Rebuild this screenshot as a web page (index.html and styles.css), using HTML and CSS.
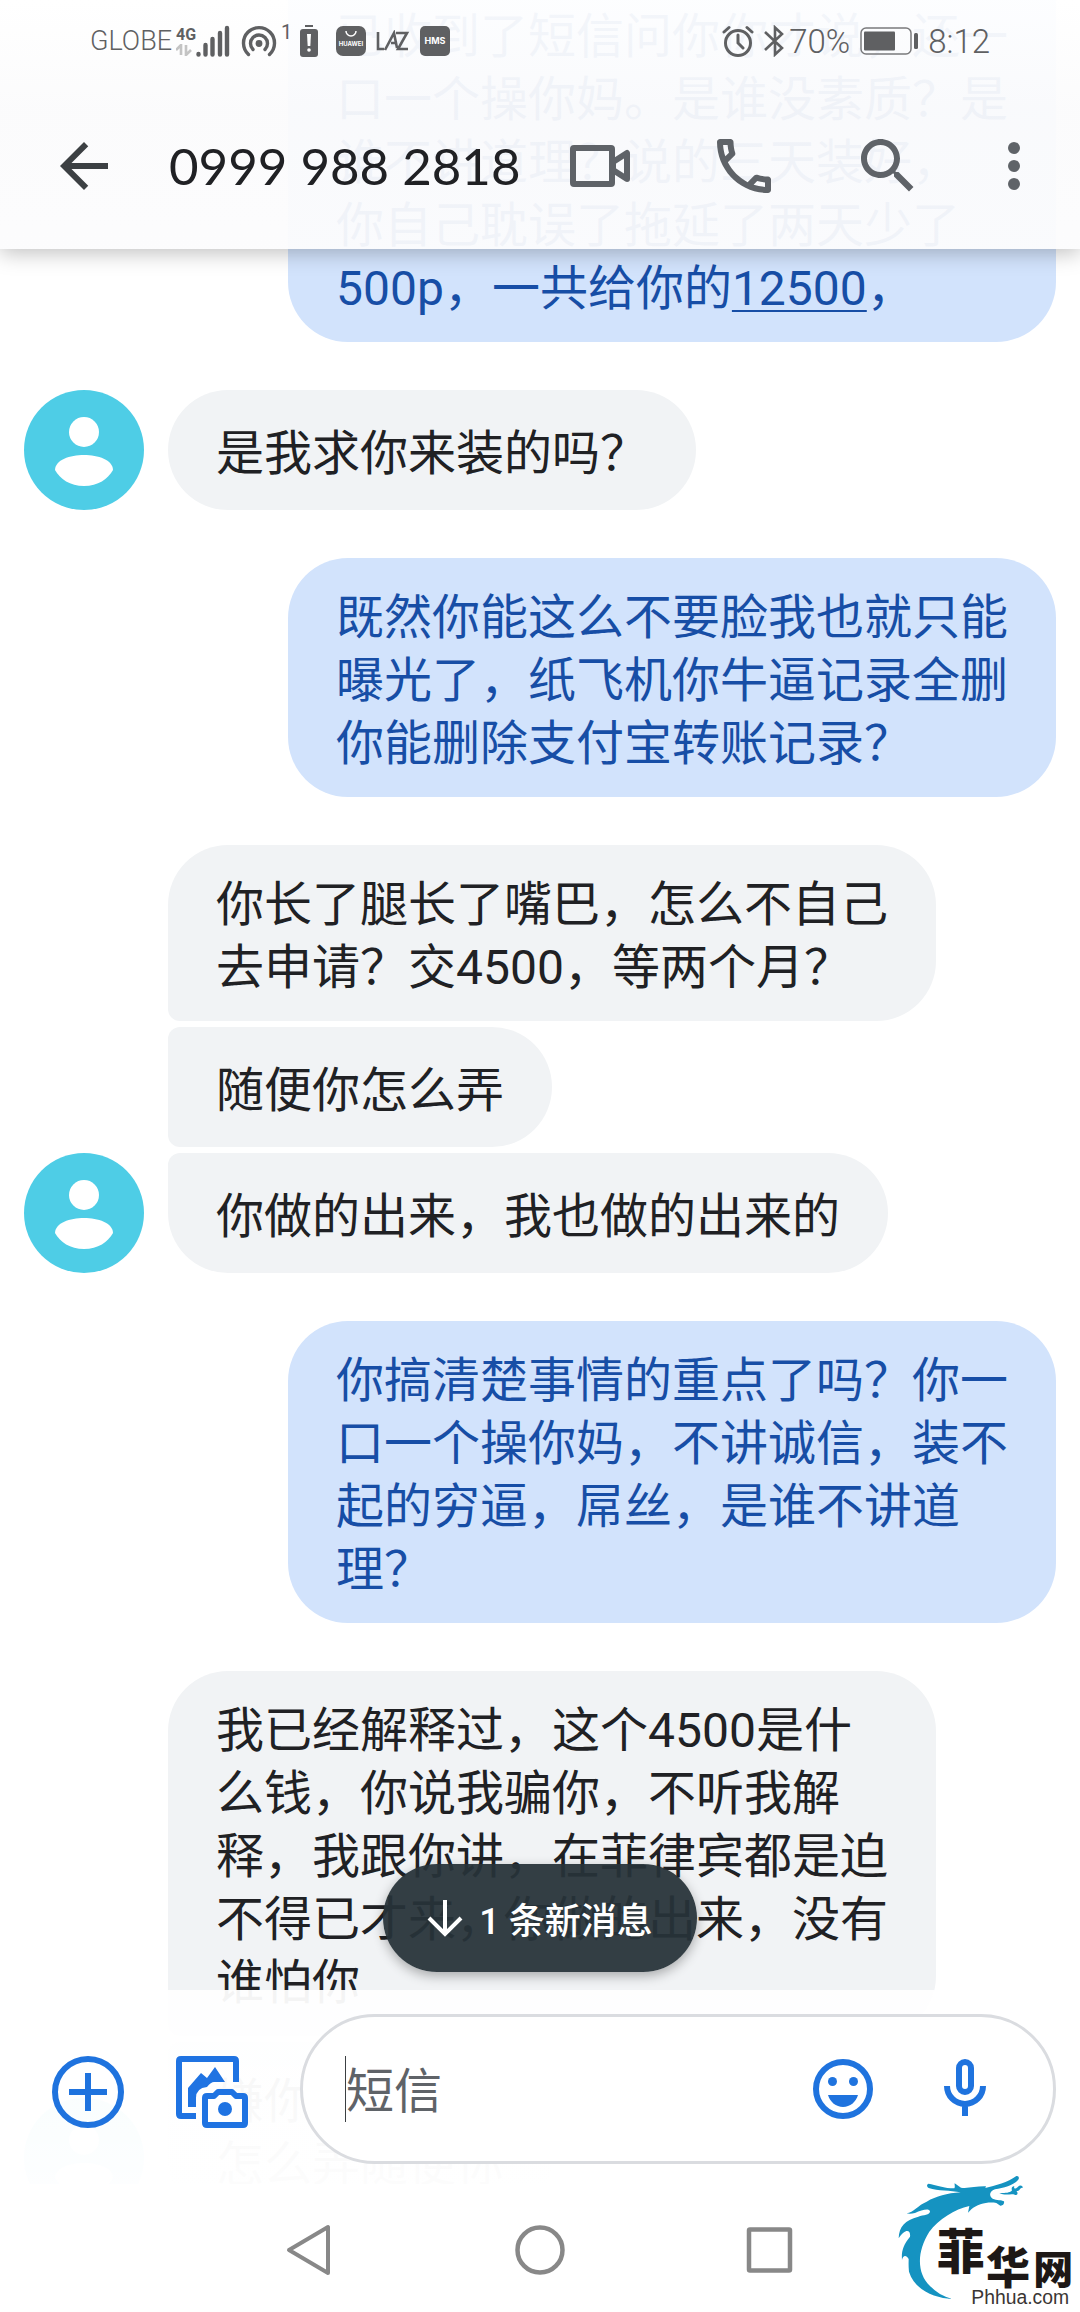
FILE: index.html
```html
<!DOCTYPE html>
<html lang="zh-CN">
<head>
<meta charset="utf-8">
<meta name="viewport" content="width=device-width, initial-scale=1">
<title>0999 988 2818</title>
<link rel="stylesheet" href="styles.css">
</head>
<body>
<div class="screen">
  <main class="chat">
    <section class="group group--out">
      <div class="bubbles">
        <p class="bubble bubble--continued">已收到了短信问你你才说，还一口一个操你妈。是谁没素质？是谁不讲道理？说的三天装好，<br>你自己耽误了拖延了两天少了500p，一共给你的<a class="bubble-link" href="#">12500</a>，</p>
      </div>
    </section>
    <section class="group group--in">
      <svg class="avatar" viewBox="0 0 120 120" aria-hidden="true"><circle cx="60" cy="60" r="60" fill="#4ecde6"/><circle cx="60" cy="42" r="15" fill="#fff"/><path d="M31 80C31 70 46 65 60 65S89 70 89 80C84 89 74 96 60 96S36 89 31 80Z" fill="#fff"/></svg>
      <div class="bubbles">
        <p class="bubble">是我求你来装的吗？</p>
      </div>
    </section>
    <section class="group group--out">
      <div class="bubbles">
        <p class="bubble">既然你能这么不要脸我也就只能曝光了，纸飞机你牛逼记录全删你能删除支付宝转账记录？</p>
      </div>
    </section>
    <section class="group group--in">
      <svg class="avatar" viewBox="0 0 120 120" aria-hidden="true"><circle cx="60" cy="60" r="60" fill="#4ecde6"/><circle cx="60" cy="42" r="15" fill="#fff"/><path d="M31 80C31 70 46 65 60 65S89 70 89 80C84 89 74 96 60 96S36 89 31 80Z" fill="#fff"/></svg>
      <div class="bubbles">
        <p class="bubble">你长了腿长了嘴巴，怎么不自己去申请？交4500，等两个月？</p>
        <p class="bubble">随便你怎么弄</p>
        <p class="bubble">你做的出来，我也做的出来的</p>
      </div>
    </section>
    <section class="group group--out">
      <div class="bubbles">
        <p class="bubble">你搞清楚事情的重点了吗？你一口一个操你妈，不讲诚信，装不起的穷逼，屌丝，是谁不讲道理？</p>
      </div>
    </section>
    <section class="group group--in">
      <svg class="avatar" viewBox="0 0 120 120" aria-hidden="true"><circle cx="60" cy="60" r="60" fill="#4ecde6"/><circle cx="60" cy="42" r="15" fill="#fff"/><path d="M31 80C31 70 46 65 60 65S89 70 89 80C84 89 74 96 60 96S36 89 31 80Z" fill="#fff"/></svg>
      <div class="bubbles">
        <p class="bubble">我已经解释过，这个4500是什么钱，你说我骗你，不听我解释，我跟你讲，在菲律宾都是迫不得已才来，你做的出来，没有谁怕你</p>
        <p class="bubble">嫌你<br>怎么弄随便你</p>
      </div>
    </section>
  </main>

  <header class="header">
    <div class="status">
      <div class="status-left">
        <span class="carrier">GLOBE</span>
        <span class="network">
          <span class="network-type">4G</span>
          <svg width="16" height="12" viewBox="0 0 16 12" aria-hidden="true"><path d="M0 6L5 1V11M10 1V11L15 6" fill="none" stroke="#c4c4c4" stroke-width="2.600"/></svg>
        </span>
        <svg class="signal" width="34" height="32" viewBox="0 0 34 32" aria-hidden="true"><path d="M2.500 29V29.500M9.500 20V29.500M16.500 14V29.500M24 8V29.500M31 3V29.500" stroke="#5f6062" stroke-width="4.400" stroke-linecap="round"/></svg>
        <svg class="hotspot" width="36" height="32" viewBox="0 0 36 32" aria-hidden="true"><g fill="none" stroke="#5f6062" stroke-width="3.400" stroke-linecap="round"><path d="M7.500 29.500A15.500 15.500 0 1 1 28.500 29.500"/><path d="M12 24.500A8.500 8.500 0 1 1 24 24.500"/></g><circle cx="18" cy="18.500" r="3.400" fill="#5f6062"/></svg>
        <span class="hotspot-count">1</span>
        <svg class="alert" width="20" height="34" viewBox="0 0 20 34" aria-hidden="true"><rect x="6" y="1" width="8" height="2" fill="#5f6062"/><rect x="1" y="5" width="18" height="28" rx="3" fill="#5f6062"/><path d="M8 10H12L11.300 22H8.700Z" fill="#fff"/><circle cx="10" cy="26" r="1.800" fill="#fff"/></svg>
        <svg class="app" width="30" height="30" viewBox="0 0 30 30" aria-hidden="true"><rect width="30" height="30" rx="7" fill="#5f6062"/><path d="M10 5A5 5 0 0 0 20 5" fill="none" stroke="#fff" stroke-width="1.500"/><text x="15" y="20" text-anchor="middle" font-family="Inter, sans-serif" font-size="6" font-weight="700" fill="#fff">HUAWEI</text></svg>
        <svg class="laz" width="34" height="22" viewBox="0 0 34 22" aria-hidden="true"><path d="M2 2V19H8M9 20L18 3L21 18M15 13H20M20 3H31L22 19H32" fill="none" stroke="#5f6062" stroke-width="2.600"/></svg>
        <svg class="app" width="30" height="30" viewBox="0 0 30 30" aria-hidden="true"><rect width="30" height="30" rx="5" fill="#5f6062"/><text x="15" y="18" text-anchor="middle" font-family="Inter, sans-serif" font-size="9" font-weight="700" fill="#fff">HMS</text></svg>
      </div>
      <div class="status-right">
        <svg width="32" height="32" viewBox="0 0 32 32" aria-hidden="true"><g fill="none" stroke="#5f6062" stroke-width="3"><circle cx="16" cy="18" r="12.500"/><path d="M16 10V18L21 23M2 7L7 2.500M30 7L25 2.500" stroke-linecap="round"/></g></svg>
        <svg class="bluetooth" width="22" height="32" viewBox="0 0 22 32" aria-hidden="true"><path d="M2 7L19 23L12 29.500V2.500L19 9L2 25" fill="none" stroke="#5f6062" stroke-width="2.600"/></svg>
        <span class="status-text">70%</span>
        <svg class="battery" width="60" height="28" viewBox="0 0 60 28" aria-hidden="true"><rect x="1" y="1" width="50" height="26" rx="5" fill="none" stroke="#7a7a7c" stroke-width="1.500"/><rect x="4" y="4.500" width="31" height="19" rx="1" fill="#5f6062"/><rect x="54" y="6" width="4" height="16" rx="1.500" fill="#5f6062"/></svg>
        <span class="status-text">8:12</span>
      </div>
    </div>
    <div class="appbar">
      <button class="back" type="button" aria-label="返回"><svg width="72" height="72" viewBox="0 0 24 24"><path d="M20 11H7.830l5.590-5.590L12 4l-8 8 8 8 1.410-1.410L7.830 13H20v-2z" fill="#3c4043"/></svg></button>
      <h1 class="title">0999 988 2818</h1>
      <button class="action" type="button" aria-label="视频通话"><svg width="72" height="72" viewBox="0 0 72 72"><g fill="none" stroke="#5f6368" stroke-width="6" stroke-linejoin="round"><rect x="9" y="18" width="39" height="36" rx="1"/><path d="M63 23V49L49 40V32Z"/></g></svg></button>
      <button class="action" type="button" aria-label="拨打电话"><svg width="72" height="72" viewBox="0 0 24 24"><path d="M6.540 5c.06.890.21 1.760.45 2.590l-1.200 1.200c-.41-1.200-.67-2.470-.76-3.790h1.510m9.860 12.020c.85.240 1.720.39 2.600.45v1.490c-1.320-.09-2.590-.35-3.800-.75l1.200-1.190M7.500 3H4c-.55 0-1 .45-1 1 0 9.390 7.610 17 17 17 .55 0 1-.45 1-1v-3.490c0-.55-.45-1-1-1-1.240 0-2.450-.2-3.570-.57-.1-.04-.21-.05-.31-.05-.26 0-.51.1-.71.290l-2.200 2.200c-2.830-1.450-5.150-3.760-6.590-6.590l2.200-2.200c.28-.28.36-.67.25-1.020C8.700 6.450 8.500 5.250 8.500 4c0-.55-.45-1-1-1z" fill="#5f6368"/></svg></button>
      <button class="action" type="button" aria-label="搜索"><svg width="72" height="72" viewBox="0 0 24 24"><path d="M15.500 14h-.79l-.28-.27C15.410 12.590 16 11.110 16 9.500 16 5.910 13.090 3 9.500 3S3 5.910 3 9.500 5.910 16 9.500 16c1.610 0 3.090-.59 4.230-1.570l.27.28v.79l5 4.990L20.490 19l-4.990-5zm-6 0C7.010 14 5 11.990 5 9.500S7.010 5 9.500 5 14 7.010 14 9.500 11.990 14 9.500 14z" fill="#5f6368"/></svg></button>
      <button class="action action--more" type="button" aria-label="更多选项"><svg width="72" height="72" viewBox="0 0 24 24" fill="#5f6368"><circle cx="12" cy="6" r="2"/><circle cx="12" cy="12" r="2"/><circle cx="12" cy="18" r="2"/></svg></button>
    </div>
  </header>

  <button class="new-messages" type="button">
    <svg width="36" height="38" viewBox="0 0 36 38" aria-hidden="true"><path d="M18 1V34M2 19L18 35L34 19" fill="none" stroke="#fff" stroke-width="4"/></svg>
    <span>1 条新消息</span>
  </button>

  <form class="composer">
    <button class="icon-button" type="button" aria-label="添加"><svg width="72" height="72" viewBox="0 0 72 72"><g fill="none" stroke="#1f73de" stroke-width="6"><circle cx="36" cy="36" r="33"/><path d="M36 17V55M17 36H55"/></g></svg></button>
    <button class="icon-button" type="button" aria-label="图库和相机"><svg width="72" height="72" viewBox="0 0 72 72"><path d="M60 26V5Q60 3 58 3H5Q3 3 3 5V58Q3 60 5 60H20" fill="none" stroke="#1f73e2" stroke-width="6"/><path d="M12 51V32L25 17L31 22L39 11L49 26H38Q35 26 31 31Q20 32 20 42V51Z" fill="#1f73e2"/><path d="M31 40H38L42 36H56L60 40H67Q69 40 69 42V67Q69 69 67 69H31Q29 69 29 67V42Q29 40 31 40Z" fill="#fff" stroke="#1f73e2" stroke-width="6" stroke-linejoin="round"/><circle cx="49" cy="53" r="7" fill="#1f73e2"/></svg></button>
    <div class="field">
      <input class="field-input" type="text" placeholder="短信" aria-label="短信">
      <button class="icon-button" type="button" aria-label="表情"><svg width="72" height="72" viewBox="0 0 72 72"><circle cx="36" cy="36" r="27" fill="none" stroke="#1f73de" stroke-width="6"/><g fill="#1f73de"><circle cx="25.500" cy="28.500" r="4.500"/><circle cx="46.500" cy="28.500" r="4.500"/><path d="M21 42H51C49 49 43 54 36 54S23 49 21 42Z"/></g></svg></button>
      <button class="icon-button" type="button" aria-label="语音"><svg width="72" height="72" viewBox="0 0 72 72"><g fill="none" stroke="#1f73de" stroke-width="6"><rect x="30" y="9" width="12" height="30" rx="6"/><path d="M18 33A18 18 0 0 0 54 33M36 51V63"/></g></svg></button>
    </div>
  </form>

  <nav class="navbar" aria-label="系统导航">
    <button class="nav-button" type="button" aria-label="返回"><svg width="50" height="52" viewBox="0 0 50 52"><path d="M43 3V49L4 26Z" fill="none" stroke="#888" stroke-width="4" stroke-linejoin="round"/></svg></button>
    <button class="nav-button" type="button" aria-label="主屏幕"><svg width="52" height="52" viewBox="0 0 52 52"><circle cx="26" cy="26" r="22.500" fill="none" stroke="#888" stroke-width="4.500"/></svg></button>
    <button class="nav-button" type="button" aria-label="最近任务"><svg width="52" height="52" viewBox="0 0 52 52"><rect x="5" y="5.500" width="41" height="41" rx="1" fill="none" stroke="#888" stroke-width="4.500"/></svg></button>
  </nav>

  <svg class="watermark" width="220" height="152" viewBox="0 0 660 456" role="img" aria-label="菲华网 Phhua.com">
    <g fill="#1593c1">
      <path d="M206 71C225 75 255 85 283 85C286 80 283 74 284 70L303 83C325 86 350 78 378 79L376 84C405 78 445 66 468 49C475 46 480 54 474 60C460 76 430 84 405 88C388 94 386 108 398 116C410 122 425 119 432 124C434 132 428 138 421 137L409 129C385 124 352 132 334 148L324 158L328 138C285 146 235 180 208 215C170 275 170 340 210 378C228 397 250 410 276 417C225 414 165 392 147 335C145 315 146 305 146 297C139 284 129 285 126 300C124 275 129 255 150 230C153 210 136 204 116 235C117 200 135 180 175 170C190 165 210 166 210 154C207 144 186 150 165 159C155 162 145 162 140 160C160 157 175 135 200 125C230 108 260 100 302 97C270 91 235 93 206 84C199 80 200 72 206 71Z"/>
      <path d="M418 99C438 100 452 98 456 91C453 84 457 78 463 79C460 87 466 88 474 80C480 73 490 77 488 84C481 81 480 94 469 94C477 99 470 108 464 104C453 99 438 109 418 99Z"/>
    </g>
    <g class="watermark-name">
      <text x="230" y="328" font-size="144">菲</text>
      <text x="378" y="373" font-size="132">华</text>
      <text x="520" y="373" font-size="120">网</text>
    </g>
    <text class="watermark-site" x="334" y="432">Phhua.com</text>
  </svg>
</div>
</body>
</html>
```
FILE: styles.css
```css
* {
  box-sizing: border-box;
}

body {
  margin: 0;
  background: #fff;
  color: #202124;
  font-family: Roboto, "Noto Sans CJK SC", sans-serif;
}

button {
  display: flex;
  align-items: center;
  justify-content: center;
  padding: 0;
  border: 0;
  background: none;
  font: inherit;
  color: inherit;
}

svg {
  display: block;
  flex: none;
}

/* The conversation fills the screen; the bars share its grid and sit above it. */
.screen {
  position: relative;
  display: grid;
  grid-template-columns: minmax(0, 1fr);
  grid-template-rows: auto minmax(0, 1fr) auto auto;
  height: 100vh;
  overflow: hidden;
}

.chat {
  grid-area: 1 / 1 / -1 / -1;
  display: flex;
  flex-direction: column;
  justify-content: flex-end;
  gap: 48px;
  min-height: 0;
  padding: 0 24px 94px;
  overflow: hidden;
}

.group {
  display: flex;
  flex: none;
  align-items: flex-end;
  gap: 24px;
}

.group--out {
  justify-content: flex-end;
}

.avatar {
  width: 120px;
  height: 120px;
}

.bubbles {
  display: flex;
  flex-direction: column;
  align-items: flex-start;
  gap: 6px;
  max-width: 768px;
}

.bubble {
  align-content: center;
  min-height: 120px;
  margin: 0;
  padding: 28px 48px 22px;
  border-radius: 60px;
  font-size: 48px;
  line-height: 63px;
}

.group--in .bubble {
  background: #f1f3f5;
}

.group--in .bubble:not(:last-child) {
  border-bottom-left-radius: 12px;
}

.group--in .bubble:not(:first-child) {
  border-top-left-radius: 12px;
}

.group--out .bubble {
  background: #d2e3fc;
  color: #174ea6;
}

.group--out .bubble--continued {
  border-top-left-radius: 12px;
  border-top-right-radius: 12px;
}

.bubble-link {
  color: inherit;
  text-decoration-thickness: 2px;
  text-underline-offset: 5px;
}

.header {
  grid-area: 1 / 1;
  z-index: 1;
  background: linear-gradient(rgba(255, 255, 255, .95), rgba(251, 251, 252, .95) 45%, rgba(252, 252, 253, .95));
  box-shadow: 0 4px 20px rgba(0, 0, 0, .25);
}

.status {
  display: flex;
  align-items: center;
  justify-content: space-between;
  height: 82px;
  padding: 0 90px;
  color: #5f6062;
}

.status-left,
.status-right {
  display: flex;
  align-items: center;
}

.carrier {
  font-size: 27px;
  font-weight: 300;
}

.network {
  display: flex;
  flex-direction: column;
  width: 20px;
  margin-left: 4px;
}

.network-type {
  font-size: 16px;
  font-weight: 700;
  line-height: 18px;
}

.hotspot {
  margin-left: 11px;
}

.hotspot-count {
  align-self: flex-start;
  width: 12px;
  margin-left: 4px;
  font-size: 20px;
  line-height: 16px;
}

.alert {
  margin: 0 17px 0 6px;
}

.laz {
  margin: 0 10px;
}

.status-text {
  font-size: 33px;
  font-weight: 300;
}

.bluetooth {
  margin: 0 4px 0 9px;
}

.battery {
  margin: 0 8px 0 10px;
}

.appbar {
  display: flex;
  align-items: center;
  height: 167px;
  padding: 0 12px 0 48px;
}

.title {
  flex: 1;
  min-width: 0;
  margin: 0 0 0 49px;
  font-family: Lato, sans-serif;
  font-size: 51px;
  font-weight: 400;
  line-height: 60px;
  white-space: nowrap;
}

.action {
  width: 144px;
  height: 144px;
}

.action--more {
  width: 108px;
}

.new-messages {
  grid-area: 2 / 1;
  z-index: 1;
  align-self: end;
  justify-self: center;
  gap: 16px;
  height: 108px;
  margin-bottom: 18px;
  padding: 0 44px;
  border-radius: 54px;
  background: rgba(38, 50, 56, .94);
  box-shadow: 0 4px 12px rgba(0, 0, 0, .3);
  color: #fff;
  font-size: 36px;
  font-weight: 500;
}

.composer {
  grid-area: 3 / 1;
  z-index: 1;
  display: flex;
  align-items: center;
  gap: 52px;
  margin: 0;
  padding: 24px 24px 20px 52px;
  background: linear-gradient(rgba(255, 255, 255, .95), rgba(255, 255, 255, .99));
}

.icon-button {
  flex: none;
  width: 72px;
  height: 72px;
}

.composer > .icon-button {
  margin-top: 6px;
}

.field {
  display: flex;
  flex: 1;
  align-items: center;
  gap: 50px;
  min-width: 0;
  height: 150px;
  padding: 0 52px 0 42px;
  border: 3px solid #dadce0;
  border-radius: 75px;
  background: #fff;
}

.field-input {
  flex: 1;
  min-width: 0;
  height: 66px;
  padding: 4px 0 0;
  border: 0;
  border-left: 1px solid #3c4043;
  background: none;
  color: #202124;
  font: inherit;
  font-size: 48px;
  outline: 0;
}

.field-input::placeholder {
  color: #5f6368;
  opacity: 1;
}

.navbar {
  grid-area: 4 / 1;
  z-index: 1;
  display: flex;
  justify-content: center;
  height: 128px;
  padding-top: 4px;
  background: #fff;
}

.nav-button {
  width: 230px;
}

/* Site mark laid over the bottom corner of the screen. */
.watermark {
  position: absolute;
  right: 0;
  bottom: 0;
  z-index: 2;
}

.watermark-name {
  fill: #1d1816;
  font-family: "Noto Sans CJK SC", sans-serif;
  font-weight: 900;
}

.watermark-site {
  fill: #3a3634;
  font-family: "Liberation Sans", sans-serif;
  font-size: 58px;
}
```
